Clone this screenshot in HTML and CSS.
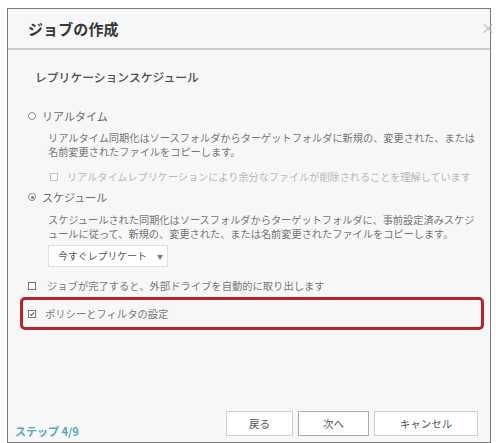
FILE: index.html
```html
<!DOCTYPE html>
<html lang="ja">
<head>
<meta charset="utf-8">
<link rel="stylesheet" href="styles.css">
</head>
<body>
<div class="dialog">
  <div class="header">
    <span class="title">ジョブの作成</span>
    <span class="close">×</span>
  </div>
  <div class="content">
    <div class="section-title">レプリケーションスケジュール</div>

    <div class="row radio-row">
      <span class="radio"></span>
      <span class="label">リアルタイム</span>
    </div>
    <div class="desc">リアルタイム同期化はソースフォルダからターゲットフォルダに新規の、変更された、または<br>名前変更されたファイルをコピーします。</div>
    <div class="row sub-row">
      <span class="check disabled"></span>
      <span class="label disabled-text">リアルタイムレプリケーションにより余分なファイルが削除されることを理解しています</span>
    </div>

    <div class="row radio-row2">
      <span class="radio checked"></span>
      <span class="label">スケジュール</span>
    </div>
    <div class="desc desc2">スケジュールされた同期化はソースフォルダからターゲットフォルダに、事前設定済みスケジ<br>ュールに従って、新規の、変更された、または名前変更されたファイルをコピーします。</div>
    <div class="select">
      <span>今すぐレプリケート</span>
      <span class="arrow">▼</span>
    </div>

    <div class="row check-row">
      <span class="check"></span>
      <span class="label small">ジョブが完了すると、外部ドライブを自動的に取り出します</span>
    </div>

    <div class="highlight">
      <span class="check checked">
        <svg width="8" height="8" viewBox="0 0 8 8"><path d="M1.5 4.2 L3.3 6 L6.7 1.8" fill="none" stroke="#555" stroke-width="1.4"/></svg>
      </span>
      <span class="label small">ポリシーとフィルタの設定</span>
    </div>
  </div>
  <div class="footer">
    <span class="step">ステップ 4/9</span>
    <div class="buttons">
      <button class="btn back">戻る</button>
      <button class="btn next">次へ</button>
      <button class="btn cancel">キャンセル</button>
    </div>
  </div>
</div>
</body>
</html>
```

FILE: styles.css
```css
* { box-sizing: border-box; }
html, body { margin: 0; padding: 0; background: #ffffff; }
body {
  font-family: "Noto Sans CJK JP", "Noto Sans", sans-serif;
  color: #555;
}
.dialog {
  position: relative;
  margin: 8px 0 0 7px;
  width: 484px;
  height: 435px;
  background: #f7f7f7;
  border: 1px solid #7b7b7b;
  display: flex;
  flex-direction: column;
}
.header {
  height: 41px;
  border-bottom: 2px solid #cdcdcd;
  padding-left: 20px;
  display: flex;
  align-items: center;
}
.title {
  font-size: 15px;
  font-weight: bold;
  color: #383838;
  line-height: 20px;
  letter-spacing: 0.1px;
}
.close {
  position: absolute;
  right: -5px;
  top: 8px;
  font-size: 14px;
  color: #bdbdbd;
  line-height: 20px;
}
.content {
  flex: 1;
}
.section-title {
  margin-top: 19px;
  padding-left: 27px;
  font-size: 11.8px;
  line-height: 16px;
  color: #4e4e4e;
  font-weight: 500;
}
.row {
  display: flex;
  align-items: center;
  height: 16px;
  white-space: nowrap;
}
.label {
  font-size: 11px;
  color: #6a6a6a;
  line-height: 16px;
}
.label.small { font-size: 10.3px; color: #777; }
.radio-row { margin-top: 23px; padding-left: 20px; }
.radio-row2 { margin-top: 4px; padding-left: 20px; }
.radio {
  width: 8px;
  height: 8px;
  border: 1px solid #888;
  border-radius: 50%;
  background: #fff;
  margin-right: 6px;
  position: relative;
}
.radio.checked::after {
  content: "";
  position: absolute;
  left: 1.5px;
  top: 1.5px;
  width: 3px;
  height: 3px;
  border-radius: 50%;
  background: #777;
}
.desc {
  margin-top: 7px;
  padding-left: 40px;
  font-size: 10.2px;
  line-height: 14px;
  color: #757575;
  white-space: nowrap;
}
.desc2 { margin-top: 8px; }
.sub-row { margin-top: 10px; padding-left: 42px; }
.check {
  width: 8px;
  height: 8px;
  border: 1px solid #777;
  background: #fff;
  margin-right: 10px;
  display: flex;
  align-items: center;
  justify-content: center;
  flex: none;
}
.check.disabled { border-color: #c4c4c4; margin-right: 9px; }
.disabled-text { font-size: 10.15px; color: #b8b8b8; }
.select {
  margin: 4px 0 0 40px;
  width: 120px;
  height: 22px;
  background: #fff;
  border: 1px solid #e0e0e0;
  display: flex;
  align-items: center;
  justify-content: space-between;
  padding: 0 4px 0 9px;
  font-size: 9.9px;
  color: #555;
}
.select .arrow { font-size: 6px; color: #777; }
.check-row { margin-top: 11px; padding-left: 20px; }
.check-row .check { margin-right: 11px; }
.highlight {
  margin: 3px 0 0 12px;
  width: 464px;
  height: 33px;
  border: 3px solid #b32630;
  border-radius: 5px;
  display: flex;
  align-items: center;
  padding-left: 5px;
  white-space: nowrap;
}
.highlight .check { margin-right: 9px; }
.footer {
  display: flex;
  justify-content: space-between;
  align-items: flex-end;
  padding: 0 12px 4px 7px;
}
.step {
  font-size: 11px;
  line-height: 14px;
  font-weight: bold;
  color: #55a9b5;
}
.buttons {
  display: flex;
  gap: 5px;
  margin-bottom: 2px;
}
.btn {
  height: 25px;
  background: #fff;
  border: 1px solid #cfcfcf;
  font-family: "Noto Sans CJK JP", sans-serif;
  font-size: 10.5px;
  color: #555;
  padding: 0;
}
.back { width: 67px; }
.next { width: 71px; border-color: #aaa; }
.cancel { width: 104px; }
```
